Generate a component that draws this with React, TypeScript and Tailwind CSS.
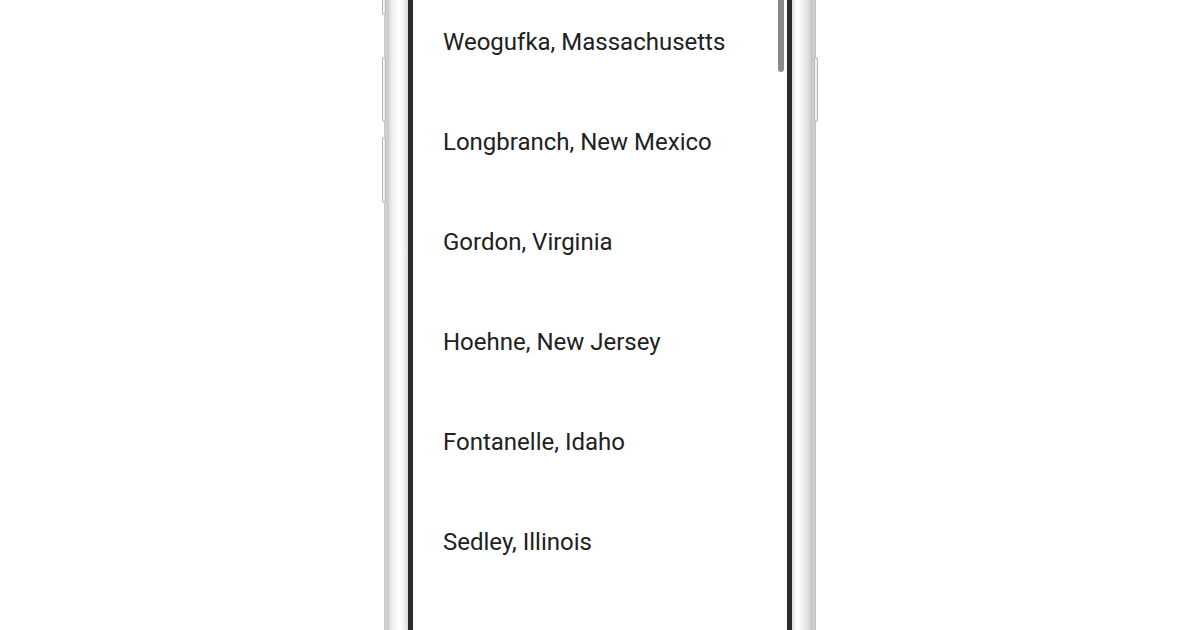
import React from 'react';

const places = [
  'Weogufka, Massachusetts',
  'Longbranch, New Mexico',
  'Gordon, Virginia',
  'Hoehne, New Jersey',
  'Fontanelle, Idaho',
  'Sedley, Illinois',
];

const SideButton: React.FC<{ className: string }> = ({ className }) => (
  <div
    className={`absolute w-[4px] rounded-[2px] border border-[#b9b9b9] bg-[linear-gradient(90deg,#e9e9e9,#ffffff,#dcdcdc)] ${className}`}
  />
);

const App: React.FC = () => {
  return (
    <div className="flex h-[630px] w-full justify-center overflow-hidden bg-white font-['Roboto',sans-serif]">
      <div className="relative flex h-[630px] w-[432px]">
        {/* left metal edge */}
        <div className="h-full w-[24px] bg-[linear-gradient(90deg,#c4c4c4_0px,#d6d6d6_2px,#c8c8c8_4px,#e4e4e4_6px,#f4f4f4_10px,#ffffff_16px,#f2f2f2_20px,#d9d9d9_24px)]" />

        <div className="relative h-full w-[384px] overflow-hidden border-x-[5px] border-[#2b2b2b] bg-white">
          <ul className="-mt-[8px]">
            {places.map((place) => (
              <li
                key={place}
                className="flex h-[100px] items-center pl-[30px] text-[24px] leading-none text-[#212121]"
              >
                {place}
              </li>
            ))}
          </ul>
          {/* scrollbar */}
          <div className="absolute right-[3px] top-0 h-[72px] w-[6px] rounded-b-[3px] bg-[#8a8a8a]" />
        </div>

        {/* right metal edge */}
        <div className="h-full w-[24px] bg-[linear-gradient(90deg,#dadada_0px,#f6f6f6_3px,#ffffff_6px,#ededed_12px,#e0e0e0_16px,#c6c6c6_20px,#d2d2d2_22px,#bebebe_24px)]" />

        <SideButton className="-top-[4px] left-[-2px] h-[19px]" />
        <SideButton className="left-[-2px] top-[57px] h-[65px]" />
        <SideButton className="left-[-2px] top-[137px] h-[66px]" />
        <SideButton className="right-[-2px] top-[57px] h-[65px]" />
      </div>
    </div>
  );
};

export default App;
